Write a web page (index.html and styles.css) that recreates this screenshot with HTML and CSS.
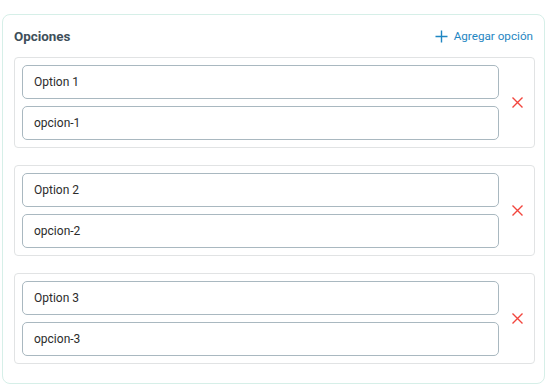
FILE: index.html
```html
<!DOCTYPE html>
<html>
<head>
<meta charset="utf-8">
<link rel="stylesheet" href="styles.css">
</head>
<body>
<div class="card">
  <div class="header">
    <span class="title">Opciones</span>
    <span class="add">
      <svg width="13" height="13" viewBox="0 0 13 13"><path d="M6.5 0.5v12M0.5 6.5h12" stroke="#1f86c2" stroke-width="1.4" fill="none"/></svg>
      Agregar opción
    </span>
  </div>
  <div class="item">
    <div class="fields">
      <div class="field">Option 1</div>
      <div class="field">opcion-1</div>
    </div>
    <div class="remove"><svg width="11" height="11" viewBox="0 0 11 11"><path d="M0.5 0.5l10 10M10.5 0.5l-10 10" stroke="#f2453d" stroke-width="1.4" fill="none"/></svg></div>
  </div>
  <div class="item">
    <div class="fields">
      <div class="field">Option 2</div>
      <div class="field">opcion-2</div>
    </div>
    <div class="remove"><svg width="11" height="11" viewBox="0 0 11 11"><path d="M0.5 0.5l10 10M10.5 0.5l-10 10" stroke="#f2453d" stroke-width="1.4" fill="none"/></svg></div>
  </div>
  <div class="item">
    <div class="fields">
      <div class="field">Option 3</div>
      <div class="field">opcion-3</div>
    </div>
    <div class="remove"><svg width="11" height="11" viewBox="0 0 11 11"><path d="M0.5 0.5l10 10M10.5 0.5l-10 10" stroke="#f2453d" stroke-width="1.4" fill="none"/></svg></div>
  </div>
</div>
</body>
</html>
```
FILE: styles.css
```css
html, body {
  margin: 0;
  padding: 0;
  background: #ffffff;
  font-family: Roboto, "Liberation Sans", sans-serif;
}
.card {
  box-sizing: border-box;
  margin: 14px 0 0 2px;
  width: 543px;
  height: 370px;
  border: 1px solid #d6efe8;
  border-radius: 8px;
  padding: 11px 9px 18px 11px;
}
.header {
  height: 20px;
  display: flex;
  align-items: center;
  justify-content: space-between;
  margin-bottom: 11px;
}
.title {
  font-size: 13.4px;
  font-weight: 700;
  color: #3e4f5a;
}
.add {
  display: flex;
  align-items: center;
  gap: 6px;
  font-size: 11.7px;
  color: #1f86c2;
  margin-right: 2px;
}
.item {
  box-sizing: border-box;
  height: 91px;
  border: 1px solid #e1e3e4;
  border-radius: 4px;
  padding: 7px 0 7px 7px;
  display: flex;
  align-items: center;
  margin-bottom: 17px;
}
.item:last-child {
  margin-bottom: 0;
}
.fields {
  width: 477px;
  display: flex;
  flex-direction: column;
  gap: 7px;
}
.field {
  box-sizing: border-box;
  height: 34px;
  border: 1px solid #a9b8c0;
  border-radius: 5px;
  padding-left: 11px;
  display: flex;
  align-items: center;
  font-size: 12px;
  color: #2b2b2b;
}
.remove {
  flex: 1;
  display: flex;
  justify-content: center;
  align-items: center;
  padding-left: 1px;
}
.remove svg {
  display: block;
}
```
